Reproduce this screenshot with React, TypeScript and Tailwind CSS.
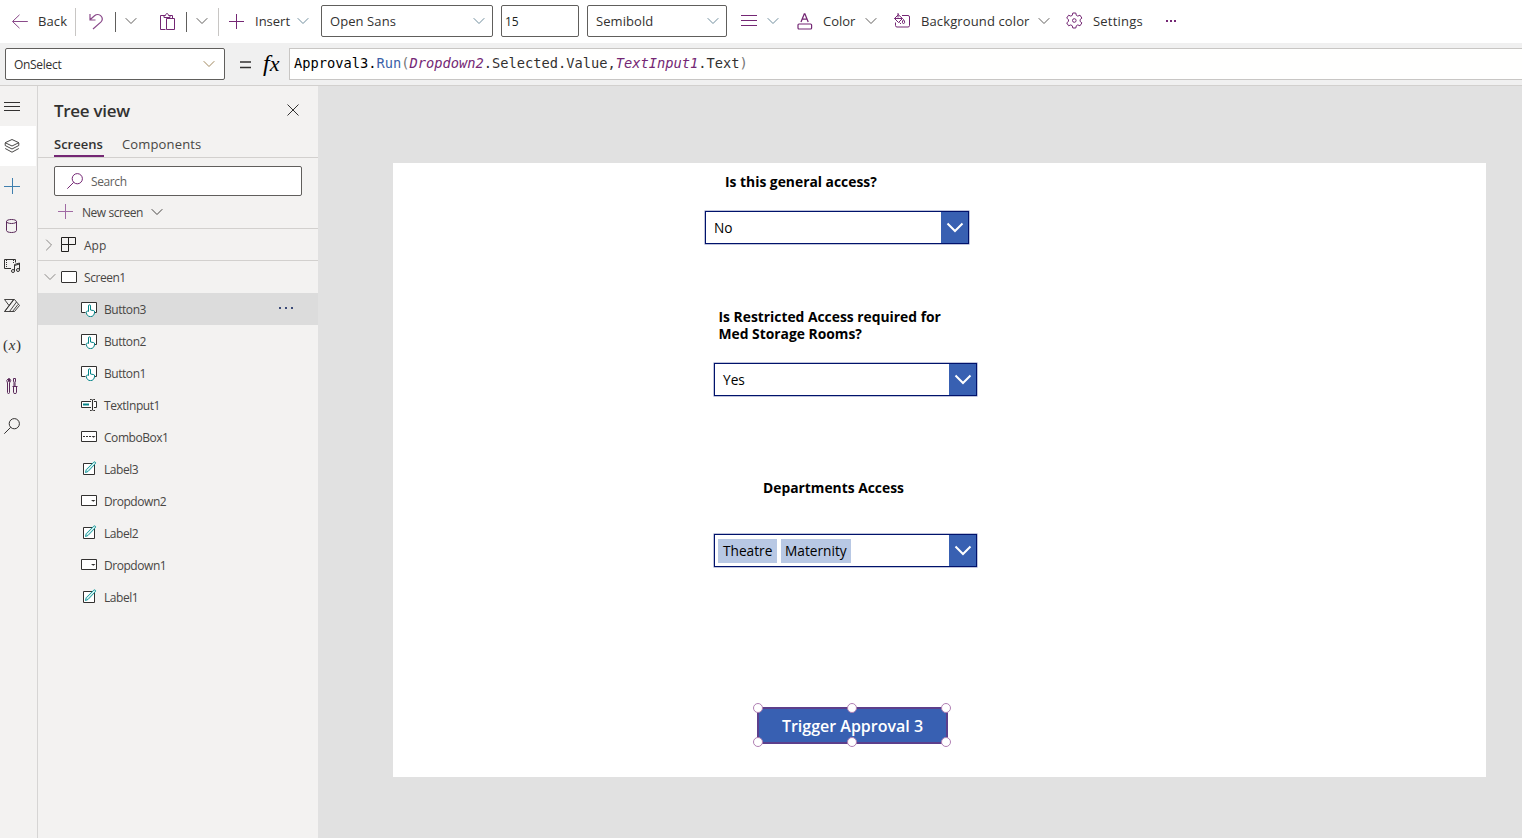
import React from "react";

type IconProps = { className?: string };

const Chevron = ({ className = "" }: IconProps) => (
  <svg width="12" height="8" viewBox="0 0 12 8" fill="none" stroke="currentColor" className={`shrink-0 ${className}`}>
    <path d="M.7 1.2 6 6.5l5.3-5.3" />
  </svg>
);

const Plus = ({ className = "" }: IconProps) => (
  <svg width="16" height="16" viewBox="0 0 16 16" fill="none" stroke="currentColor" className={`shrink-0 ${className}`}>
    <path d="M0 7.500h15M7.500 0v15" />
  </svg>
);

const BackIcon = () => (
  <svg width="16" height="16" viewBox="0 0 16 16" fill="none" stroke="#8a4a8a" className="shrink-0">
    <path d="M.8 7.500h15M7.500.8l-7 6.700 7 6.700" />
  </svg>
);

const UndoIcon = () => (
  <svg width="15" height="18" viewBox="0 0 15 18" fill="none" stroke="#8a4a8a" className="shrink-0">
    <path d="M1 1v6h5.500M1.300 6.500 5.500 2.700c2-1.700 4.800-1.600 6.400.2 1.700 1.800 1.600 4.400-.1 6.200L4 16" strokeWidth="1.200" />
  </svg>
);

const PasteIcon = () => (
  <svg width="16" height="18" viewBox="0 0 16 18" fill="none" stroke="#742774" className="shrink-0">
    <path d="M5.500 16.500h-5v-14h3.500M10 2.500h2.500v3M4 4.500v-2h1.500c.2-1.300.7-2 1.500-2s1.300.7 1.500 2H10v2zM6.500 5.500h8v11h-8z" />
  </svg>
);

const LinesIcon = () => (
  <svg width="16" height="12" viewBox="0 0 16 12" fill="none" stroke="#742774" className="shrink-0">
    <path d="M0 .5h16M0 5.500h16M0 10.500h16" />
  </svg>
);

const FontColorIcon = () => (
  <svg width="16" height="18" viewBox="0 0 16 18" fill="none" stroke="#742774" className="shrink-0">
    <path d="M4 9 7.300.8h.6L11.200 9M5.200 6.200h5" strokeWidth="1.300" />
    <rect x="1" y="11" width="13.600" height="5" rx="1" strokeWidth="1.200" />
  </svg>
);

const FillIcon = () => (
  <svg width="18" height="16" viewBox="0 0 18 16" fill="none" stroke="#742774" className="shrink-0">
    <path d="M8 2.500h6q1.500 0 1.500 1.500v8.500q0 1.500-1.500 1.500H3q-1.500 0-1.500-1.500v-3M4 1.500 8.500 5.500 4.500 9.500.5 5.500l4-4M4 0v4.500M.5 5.500H8M9.500 6.500c1.500 2 1.500 4 0 4s-1.500-2 0-4zM5.500 9.500 7 11" />
  </svg>
);

const GearIcon = () => (
  <svg width="18" height="18" viewBox="0 0 18 18" fill="none" stroke="#742774" className="shrink-0">
    <path d="M6.800 1h3l.5 2.300 1.500.8 2.200-.9 1.900 2.900-1.800 1.500v1.800l1.800 1.500-1.900 2.900-2.200-.9-1.500.9-.5 2.200h-3l-.5-2.200-1.500-.9-2.200.9-1.900-2.900 1.800-1.500V7.600L.7 6.100l1.900-2.900 2.200.9 1.500-.8z" strokeLinejoin="round" />
    <circle cx="8.300" cy="8.500" r="1.800" />
  </svg>
);

const SearchIcon = ({ className = "" }: IconProps) => (
  <svg width="16" height="16" viewBox="0 0 16 16" fill="none" stroke="currentColor" className={`shrink-0 ${className}`}>
    <circle cx="10.300" cy="5.700" r="5.100" />
    <path d="M6.700 9.300.3 15.700" />
  </svg>
);

const railIcons = [
  <path key="menu" d="M0 4.500h16M0 8.500h16M0 12.500h16" />,
  <path key="layers" d="m8 1.500 6.800 3.200L8 8 1.200 4.700zM1.200 7.500 8 11l6.800-3.500M1.200 10.500 8 14.200l6.800-3.700M1.200 5v2.500M14.800 5v2.500" strokeWidth=".9" />,
  <path key="plus" d="M0 8.500h16M8.500 0v16" stroke="#3f7fae" />,
  <path key="data" d="M2.500 3.500c0-1.200 2.200-2 5-2s5 .8 5 2-2.200 2-5 2-5-.8-5-2zv9c0 1.200 2.200 2 5 2s5-.8 5-2v-9" />,
  <g key="media">
    <path d="M7 10.500H.5v-9h11v3" />
    <path d="M2.500 2v8M9.500 2v3" strokeDasharray="1 1" />
    <path d="M10.500 13V6.500l5-1.500v6.500M10.500 7.500l5-1.500" />
    <circle cx="9" cy="13" r="1.500" />
    <circle cx="14" cy="12" r="1.500" />
  </g>,
  <path key="flow" d="M.5 1.500h10l5 6-5 6H.5l4.500-6zM5 7.500l4.500-6M.8 13.500l9.200-12M5.500 13.500 12.500 4M8.500 13.500l5.500-7" strokeWidth=".9" />,
  <text key="vars" x="-1" y="11.500" fontSize="15" fill="#323130" stroke="none" fontFamily="Liberation Serif, serif" textLength="18">
    (<tspan fontStyle="italic">x</tspan>)
  </text>,
  <g key="tools">
    <path d="M4.500.500v3h1v-3q2.500 1.500 0 4.500v9.500q0 1-1 1t-1-1V5q-2-3 1-4.500z" />
    <path d="M9.500.5h2V3l-.500 1.500v4h-1v-4L9.500 3zM8.500 8.500h5M9.500 8.500v6q0 1 1.500 1t1.500-1v-6" />
  </g>,
  <g key="search">
    <circle cx="10.300" cy="5.700" r="5.100" />
    <path d="M6.700 9.300.3 15.700" />
  </g>,
];

const controlIcons = {
  button: (
    <>
      <path d="M4.500 11.500h-4v-10h15v10h-2" fill="#fff" />
      <path d="M7.500 10.500V5q0-1.200 1-1.200t1 1.200v4l3.200.6q1 .2.900 1.400c-.2 3-1.700 4.600-4.100 4.600-2.500 0-3.900-1.600-4.200-4.200-.1-1.300.8-1.700 2.200-.9z" fill="#fff" stroke="#038387" />
    </>
  ),
  input: (
    <>
      <path d="M10 10.500H.5v-6H10M13 4.500h2.500v6H13" fill="#fff" />
      <path d="M2 7.500h6" stroke="#038387" strokeWidth="2" />
      <path d="M9 2.500h1.500l1 .5 1-.5H14M11.500 3v10M9 13.500h1.500l1-.5 1 .5H14" />
    </>
  ),
  combo: (
    <>
      <path d="M.5 2.500h15v10H.5z" fill="#fff" />
      <path d="M2 7.500h9" strokeDasharray="2 1" />
      <path d="M10.500 7h4l-2 1.800z" fill="#323130" stroke="none" />
    </>
  ),
  label: (
    <>
      <path d="M2.500 2.500h11v11h-11z" fill="#fff" />
      <path d="m4.500 11.500.7-2.800L12.700 1.200q1-.7 1.600 0t0 1.500L7 10.500z" fill="#d5eeee" stroke="#159a9c" />
    </>
  ),
  dropdown: (
    <>
      <path d="M.5 2.500h15v10H.5z" fill="#fff" />
      <path d="M10 7h4.500l-2.200 1.800z" fill="#323130" stroke="none" />
    </>
  ),
};

const controls: { name: string; icon: keyof typeof controlIcons }[] = [
  { name: "Button3", icon: "button" },
  { name: "Button2", icon: "button" },
  { name: "Button1", icon: "button" },
  { name: "TextInput1", icon: "input" },
  { name: "ComboBox1", icon: "combo" },
  { name: "Label3", icon: "label" },
  { name: "Dropdown2", icon: "dropdown" },
  { name: "Label2", icon: "label" },
  { name: "Dropdown1", icon: "dropdown" },
  { name: "Label1", icon: "label" },
];

const Toolbar = () => (
  <div className="flex h-[43px] shrink-0 items-center bg-white pl-3 text-[13px] whitespace-nowrap text-[#323130]">
    <BackIcon />
    <span className="ml-[10px] w-[37px] tracking-[0.100px]">Back</span>
    <div className="h-7 w-px bg-[#c8c6c4]" />
    <div className="ml-[13px] flex w-[26px]">
      <UndoIcon />
    </div>
    <div className="h-5 w-px bg-[#605e5c]" />
    <Chevron className="mb-px ml-[9px] text-[#605e5c]" />
    <div className="ml-[23px] flex w-[26px]">
      <PasteIcon />
    </div>
    <div className="h-5 w-px bg-[#605e5c]" />
    <Chevron className="mb-px ml-[9px] text-[#605e5c]" />
    <div className="ml-[10px] h-7 w-px bg-[#c8c6c4]" />
    <Plus className="ml-[10px] text-[#742774]" />
    <span className="ml-[10px] w-[42px]">Insert</span>
    <Chevron className="mb-px text-[#6f8c9c]" />
    <div className="mb-px ml-[12px] flex h-8 w-[172px] items-center justify-between rounded-[2px] border border-[#605e5c] pr-[7px] pl-2">
      <span className="pt-[2px] tracking-[0.080px]">Open Sans</span>
      <Chevron className="text-[#6f8c9c]" />
    </div>
    <div className="mb-px ml-2 flex h-8 w-[78px] items-center rounded-[2px] border border-[#605e5c] pt-[2px] pl-[3px] text-[12px] text-[#201f1e]">15</div>
    <div className="mb-px ml-2 flex h-8 w-[140px] items-center justify-between rounded-[2px] border border-[#605e5c] pr-[7px] pl-2">
      <span className="pt-[2px] tracking-[0.080px]">Semibold</span>
      <Chevron className="text-[#6f8c9c]" />
    </div>
    <div className="ml-[14px] flex w-[26px] pb-px">
      <LinesIcon />
    </div>
    <Chevron className="mb-px text-[#6f8c9c]" />
    <div className="ml-[18px] flex w-[26px]">
      <FontColorIcon />
    </div>
    <span className="w-[42px]">Color</span>
    <Chevron className="mb-px text-[#605e5c]" />
    <div className="ml-[17px] flex w-[27px] pb-[2px]">
      <FillIcon />
    </div>
    <span className="w-[117px] tracking-[0.120px]">Background color</span>
    <Chevron className="mb-px text-[#605e5c]" />
    <div className="ml-[16px] flex w-[27px] pb-px">
      <GearIcon />
    </div>
    <span className="w-[73px] tracking-[0.200px]">Settings</span>
    <div className="flex gap-[2px] pb-px">
      <i className="size-[2px] bg-[#742774]" />
      <i className="size-[2px] bg-[#742774]" />
      <i className="size-[2px] bg-[#742774]" />
    </div>
  </div>
);

const FormulaBar = () => (
  <div className="flex h-[43px] shrink-0 items-start border-b border-[#d2d0ce] bg-[#f0f0f0] pt-[5px] pl-[5px]">
    <div className="flex h-8 w-[220px] items-center justify-between rounded-[2px] border border-[#605e5c] bg-white pr-[9px] pl-2 text-[12px] text-[#323130]">
      <span className="pt-[2px] tracking-[-0.300px]">OnSelect</span>
      <Chevron className="text-[#a0875c]" />
    </div>
    <svg width="11" height="8" viewBox="0 0 11 8" stroke="#323130" strokeWidth="1.500" className="mt-[13px] ml-[15px]">
      <path d="M0 1h11M0 6.500h11" />
    </svg>
    <span className="ml-[12px] w-[26px] font-['Liberation_Serif',serif] text-[24px] leading-[30px] text-black italic">
      f<span className="text-[22px]">x</span>
    </span>
    <div className="flex h-8 flex-1 items-center border border-r-0 border-[#c8c6c4] bg-[#fffffe] pb-[2px] pl-1 font-['DejaVu_Sans_Mono',monospace] text-[13.710px] whitespace-pre text-[#323130]">
      <span className="text-black">Approval3.</span>
      <span className="text-[#3b5fa8]">Run</span>
      <span className="text-[#767676]">(</span>
      <span className="text-[#742774] italic">Dropdown2</span>
      <span>.Selected.Value,</span>
      <span className="text-[#742774] italic">TextInput1</span>
      <span>.Text</span>
      <span className="text-[#767676]">)</span>
    </div>
  </div>
);

const Rail = () => (
  <nav className="flex w-[38px] shrink-0 flex-col border-r border-[#d6d5d4]">
    {railIcons.map((icon, i) => (
      <div key={i} className={`flex h-10 w-9 items-center pl-1 ${i === 1 ? "bg-white" : ""}`}>
        <svg width="16" height="16" viewBox="0 0 16 16" fill="none" stroke={i === 3 || i === 7 ? "#5a2a5a" : "#323130"} className="overflow-visible">
          {icon}
        </svg>
      </div>
    ))}
  </nav>
);

const TreeView = () => (
  <aside className="flex w-[280px] shrink-0 flex-col text-[12px] text-[#484644]">
    <div className="flex h-[47px] items-center justify-between pr-[19px] pl-4 text-[#323130]">
      <h1 className="pt-[2px] text-[17px] font-semibold tracking-[-0.300px]">Tree view</h1>
      <svg width="12" height="12" viewBox="0 0 12 12" fill="none" stroke="currentColor">
        <path d="m.5.5 11 11m0-11-11 11" />
      </svg>
    </div>
    <div className="flex h-[25px] items-start gap-[18px] border-b border-[#d2d0ce] pl-4 text-[13px]">
      <div className="h-[24px] w-[50px] border-b-2 border-[#742774] leading-[22px] font-semibold whitespace-nowrap text-[#323130]">Screens</div>
      <div className="leading-[22px] tracking-[0.150px]">Components</div>
    </div>
    <div className="mx-4 mt-2 flex h-[30px] items-center rounded-[2px] border border-[#605e5c] bg-white pl-3 text-[#605e5c]">
      <SearchIcon className="mr-2 text-[#742774]" />
      <span className="pt-[2px] tracking-[-0.400px]">Search</span>
    </div>
    <div className="flex h-[33px] items-center border-b border-[#d2d0ce] pl-5">
      <Plus className="text-[#a06aa4]" />
      <span className="ml-2 w-[69px] pt-px tracking-[-0.450px]">New screen</span>
      <Chevron />
    </div>
    <div className="flex h-8 items-center border-b border-[#d2d0ce] pl-[5px]">
      <Chevron className="-rotate-90 text-[#8a8886]" />
      <svg width="16" height="16" viewBox="0 0 16 16" fill="none" stroke="#201f1e" className="ml-[6px]">
        <path d="M.5.500h14v7H.500zM.5 7.500v7h7V.500" />
      </svg>
      <span className="ml-[7px] pt-[2px]">App</span>
    </div>
    <div className="flex h-8 items-center pl-[6px]">
      <Chevron className="text-[#8a8886]" />
      <div className="ml-[5px] h-3 w-4 rounded-[1px] border border-[#323130] bg-white" />
      <span className="ml-[7px] pt-px tracking-[-0.450px]">Screen1</span>
    </div>
    {controls.map(({ name, icon }, i) => (
      <div key={name} className={`flex h-8 items-center pr-6 pl-[43px] ${i === 0 ? "bg-[#dcdcdc]" : ""}`}>
        <svg width="16" height="16" viewBox="0 0 16 16" fill="none" stroke="#323130" className="shrink-0">
          {controlIcons[icon]}
        </svg>
        <span className="ml-[7px] flex-1 pt-[2px] tracking-[-0.450px]">{name}</span>
        {i === 0 && (
          <div className="mr-px mb-[3px] flex gap-1">
            <i className="size-[2px] bg-[#3b4a78]" />
            <i className="size-[2px] bg-[#3b4a78]" />
            <i className="size-[2px] bg-[#3b4a78]" />
          </div>
        )}
      </div>
    ))}
  </aside>
);

const Select = ({ className, children }: { className: string; children: React.ReactNode }) => (
  <div className={`absolute flex h-[33px] items-center border border-[#00126b] bg-white text-[13.700px] text-black shadow-[0_0_0_0.500px_#8088b5] ${className}`}>
    <div className="flex flex-1 items-center">{children}</div>
    <div className="flex h-full w-[27px] items-center justify-center bg-[#3860b2]">
      <svg width="18" height="11" viewBox="0 0 18 11" fill="none" stroke="#fff" strokeWidth="2">
        <path d="m1.500 1.500 7.500 7.500 7.500-7.500" />
      </svg>
    </div>
  </div>
);

const Handle = ({ className }: { className: string }) => (
  <i className={`absolute size-[10px] rounded-full border-[1.500px] border-[#b07fb3] bg-white ${className}`} />
);

const Canvas = () => (
  <main className="flex-1 bg-[#e1e1e1] pt-[77px] pl-[75px]">
    <div className="relative h-[614px] w-[1093px] bg-white text-black">
      <div className="absolute top-[10px] left-[332px] text-[13.850px] leading-[17px] font-bold whitespace-nowrap">Is this general access?</div>
      <Select className="top-[48px] left-[312px] w-[264px]">
        <span className="pt-[2px] pl-2">No</span>
      </Select>
      <div className="absolute top-[145px] left-[325.500px] text-[13.850px] leading-[17px] font-bold whitespace-nowrap">
        Is Restricted Access required for
        <br />
        Med Storage Rooms?
      </div>
      <Select className="top-[200px] left-[321px] w-[263px]">
        <span className="pt-[2px] pl-2">Yes</span>
      </Select>
      <div className="absolute top-[316px] left-[370px] text-[13.850px] leading-[17px] font-bold whitespace-nowrap">Departments Access</div>
      <Select className="top-[371px] left-[321px] w-[263px]">
        <span className="ml-[3px] h-6 w-[59px] bg-[#b8c8e4] pl-[5px] leading-6">Theatre</span>
        <span className="ml-1 h-6 w-[70px] bg-[#b8c8e4] pl-1 leading-6">Maternity</span>
      </Select>
      <button className="absolute top-[544px] left-[364px] h-[37px] w-[191px] rounded-[4px] border-2 border-[#5c3f8c] bg-[#3860b2] pt-px text-[16px] leading-[33px] font-semibold whitespace-nowrap text-white">
        Trigger Approval 3
      </button>
      <Handle className="top-[540px] left-[360px]" />
      <Handle className="top-[540px] left-[454px]" />
      <Handle className="top-[540px] left-[548px]" />
      <Handle className="top-[574px] left-[360px]" />
      <Handle className="top-[574px] left-[454px]" />
      <Handle className="top-[574px] left-[548px]" />
    </div>
  </main>
);

export default function App() {
  return (
    <div className="flex h-[838px] w-[1522px] flex-col overflow-hidden bg-[#f3f2f1] font-['Open_Sans',sans-serif]">
      <Toolbar />
      <FormulaBar />
      <div className="flex min-h-0 flex-1">
        <Rail />
        <TreeView />
        <Canvas />
      </div>
    </div>
  );
}
